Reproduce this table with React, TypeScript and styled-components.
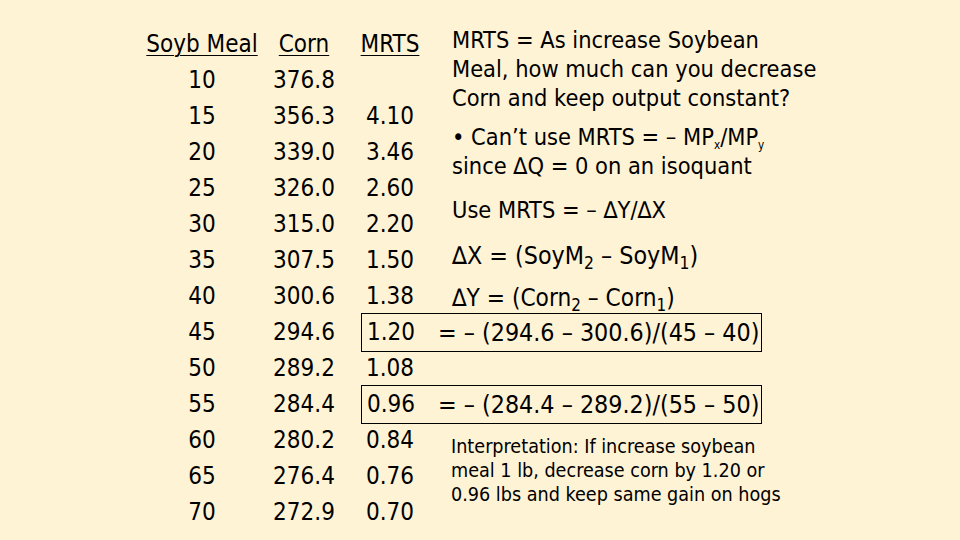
import styled, {createGlobalStyle} from 'styled-components';

const GlobalStyle = createGlobalStyle`
  html, body {
    margin: 0;
    padding: 0;
    background: #fff3d6;
  }
  body {
    font-family: "DejaVu Sans Condensed", "DejaVu Sans", sans-serif;
    color: #000;
  }
`;

const Slide = styled.div`
  width: 960px;
  height: 540px;
  box-sizing: border-box;
  padding: 26px 0 0 147px;
  overflow: hidden;
`;

const Table = styled.div`
  display: grid;
  grid-template-columns: 110px 94px 78px 1fr;
  grid-auto-rows: 36px;
  font-size: 24px;
`;

const Cell = styled.div<{$col: number}>`
  grid-column: ${(p) => p.$col};
  display: flex;
  align-items: center;
  justify-content: center;
  white-space: nowrap;
`;

const Head = styled(Cell)`
  text-decoration: underline;
  text-underline-offset: 3px;
  text-decoration-thickness: 1px;
`;

const Notes = styled.div`
  grid-column: 4;
  grid-row: 1 / 9;
  padding-left: 23px;
  white-space: nowrap;
`;

const Para = styled.p<{$gap?: number; $size?: number}>`
  margin: ${(p) => p.$gap ?? 0}px 0 0;
  font-size: ${(p) => p.$size ?? 23.4}px;
  line-height: 29px;
`;

const Boxed = styled.div<{$row: number}>`
  grid-column: 3 / 5;
  grid-row: ${(p) => p.$row};
  align-self: center;
  margin-left: 10px;
  width: 401px;
  height: 39px;
  box-sizing: border-box;
  border: 1px solid #000;
  display: flex;
  align-items: center;
`;

const BoxValue = styled.span`
  width: 58px;
  text-align: center;
`;

const Equation = styled.span`
  margin-left: 18px;
  font-size: 24.8px;
  white-space: nowrap;
`;

const Interpretation = styled.div`
  grid-column: 4;
  grid-row: 12 / 15;
  padding: 13px 0 0 22px;
  font-size: 19.6px;
  line-height: 24px;
  white-space: nowrap;
`;

const Sub = styled.sub<{$small?: boolean}>`
  font-size: ${(p) => (p.$small ? '0.5em' : '0.7em')};
  vertical-align: -0.3em;
  line-height: 0;
`;

const rows: [string, string, string][] = [
  ['10', '376.8', ''],
  ['15', '356.3', '4.10'],
  ['20', '339.0', '3.46'],
  ['25', '326.0', '2.60'],
  ['30', '315.0', '2.20'],
  ['35', '307.5', '1.50'],
  ['40', '300.6', '1.38'],
  ['45', '294.6', '1.20'],
  ['50', '289.2', '1.08'],
  ['55', '284.4', '0.96'],
  ['60', '280.2', '0.84'],
  ['65', '276.4', '0.76'],
  ['70', '272.9', '0.70'],
];

const equations: Record<string, string> = {
  '45': '= \u2013 (294.6 \u2013 300.6)/(45 \u2013 40)',
  '55': '= \u2013 (284.4 \u2013 289.2)/(55 \u2013 50)',
};

export default function App() {
  return (
    <>
      <GlobalStyle />
      <Slide>
        <Table>
          <Head $col={1}>Soyb Meal</Head>
          <Head $col={2}>Corn</Head>
          <Head $col={3}>MRTS</Head>
          <Notes>
            <Para>
              MRTS = As increase Soybean
              <br />
              Meal, how much can you decrease
              <br />
              Corn and keep output constant?
            </Para>
            <Para $gap={10}>
              &bull; Can&rsquo;t use MRTS = &ndash; MP<Sub $small>x</Sub>/MP<Sub $small>y</Sub>
              <br />
              since &#8710;Q = 0 on an isoquant
            </Para>
            <Para $gap={15}>Use MRTS = &ndash; &#8710;Y/&#8710;X</Para>
            <Para $gap={16} $size={24.8}>
              &#8710;X = (SoyM<Sub>2</Sub> &ndash; SoyM<Sub>1</Sub>)
            </Para>
            <Para $gap={14} $size={24.2}>
              &#8710;Y = (Corn<Sub>2</Sub> &ndash; Corn<Sub>1</Sub>)
            </Para>
          </Notes>
          {rows.map(([soy, corn, mrts], i) => {
            const row = i + 2;
            const eq = equations[soy];
            return [
              <Cell key={soy + 's'} $col={1} style={{gridRow: row}}>
                {soy}
              </Cell>,
              <Cell key={soy + 'c'} $col={2} style={{gridRow: row}}>
                {corn}
              </Cell>,
              eq ? (
                <Boxed key={soy + 'b'} $row={row}>
                  <BoxValue>{mrts}</BoxValue>
                  <Equation>{eq}</Equation>
                </Boxed>
              ) : (
                <Cell key={soy + 'm'} $col={3} style={{gridRow: row}}>
                  {mrts}
                </Cell>
              ),
            ];
          })}
          <Interpretation>
            Interpretation: If increase soybean
            <br />
            meal 1 lb, decrease corn by 1.20 or
            <br />
            0.96 lbs and keep same gain on hogs
          </Interpretation>
        </Table>
      </Slide>
    </>
  );
}
